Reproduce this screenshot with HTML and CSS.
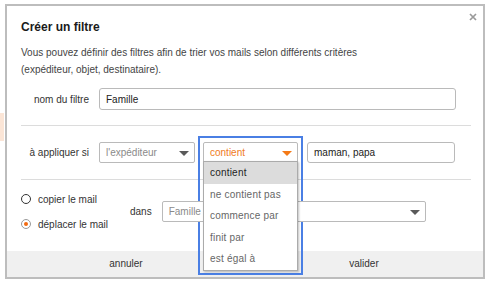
FILE: index.html
```html
<!DOCTYPE html>
<html>
<head>
  <meta charset="utf-8">
  <title>Créer un filtre</title>
  <link rel="stylesheet" href="styles.css">
</head>
<body>
  <div class="dialog">
    <a class="close" href="#">
      <svg width="8" height="8" viewBox="0 0 8 8"><path d="M1 1L7 7M7 1L1 7" stroke="#9a9a9a" stroke-width="1.7"/></svg>
    </a>

    <h1 class="title">Créer un filtre</h1>
    <p class="intro">Vous pouvez définir des filtres afin de trier vos mails selon différents critères<br>(expéditeur, objet, destinataire).</p>

    <div class="row row-name">
      <label class="label">nom du filtre</label>
      <div class="field text name">Famille</div>
    </div>

    <hr class="sep">

    <div class="row row-rule">
      <label class="label">à appliquer si</label>
      <div class="field select sender">l'expéditeur<span class="arrow"></span></div>
      <div class="focus">
        <div class="field select active">contient<span class="arrow"></span></div>
        <ul class="menu">
          <li class="current">contient</li>
          <li>ne contient pas</li>
          <li>commence par</li>
          <li>finit par</li>
          <li>est égal à</li>
        </ul>
      </div>
      <div class="field text value">maman, papa</div>
    </div>

    <hr class="sep sep-low">

    <div class="row row-action">
      <div class="radios">
        <div class="radio"><span class="dot"></span>copier le mail</div>
        <div class="radio checked"><span class="dot"></span>déplacer le mail</div>
      </div>
      <span class="dans">dans</span>
      <div class="field select folder">Famille<span class="arrow"></span></div>
    </div>

    <div class="footer">
      <a class="btn" href="#">annuler</a>
      <a class="btn" href="#">valider</a>
    </div>
  </div>
</body>
</html>
```

FILE: styles.css
```css
html {
  font-family: "Liberation Sans", Arial, sans-serif;
}
body {
  margin: 0;
  font-size: 10px;
  color: #333;
  background: linear-gradient(#fbe5d6, #fbe5d6) 0 113px / 4px 28px no-repeat, #fff;
}

a {
  text-decoration: none;
  color: inherit;
}

.dialog {
  position: relative;
  box-sizing: border-box;
  width: 480px;
  height: 275px;
  margin: 4px 0 0 5px;
  border: 2px solid #bdbdbd;
  background: #fff;
  display: flex;
  flex-direction: column;
}

.close {
  position: absolute;
  top: 7px;
  right: 6px;
  width: 8px;
  height: 8px;
  display: flex;
}

.title {
  margin: 13px 0 0 14px;
  font-size: 12px;
  line-height: 16px;
  color: #1a1a1a;
}
.intro {
  margin: 9px 0 0 14px;
  line-height: 17px;
  color: #444;
}

.row {
  display: flex;
  align-items: center;
  margin-left: 14px;
}
.row-name {
  margin-top: 10px;
}
.row-rule {
  margin-top: 16px;
}
.row-action {
  margin-top: 11px;
}

.label {
  width: 68px;
  margin-right: 10px;
  text-align: right;
  color: #333;
}

.sep {
  margin: 15px 12px 0 14px;
  border: 0;
  border-top: 1px solid #dcdcdc;
}
.sep-low {
  margin-top: 16px;
}

.field {
  position: relative;
  box-sizing: border-box;
  height: 21px;
  padding-left: 6px;
  border: 1px solid #bababa;
  border-radius: 3px;
  background: #fff;
  display: flex;
  align-items: center;
  color: #222;
}
.field.select {
  color: #8a8a8a;
  border-radius: 2px;
}
.name {
  width: 357px;
  height: 22px;
}
.sender {
  width: 96px;
}
.value {
  width: 148px;
  margin-left: 9px;
}
.folder {
  width: 264px;
}

.arrow {
  position: absolute;
  right: 5px;
  top: 8px;
  width: 0;
  height: 0;
  border-left: 5px solid transparent;
  border-right: 5px solid transparent;
  border-top: 5px solid #5a5a5a;
}

.focus {
  position: relative;
  margin-left: 8px;
}
.focus::before {
  content: "";
  position: absolute;
  left: -5px;
  top: -6px;
  right: -5px;
  height: 139px;
  border: 2px solid #4a7fe4;
  box-sizing: border-box;
}
.field.active {
  width: 95px;
  color: #f07b1d;
}
.active .arrow {
  border-top-color: #f47a17;
}

.menu {
  position: absolute;
  left: 0;
  right: 0;
  top: 19px;
  margin: 0;
  padding: 0;
  list-style: none;
  background: #fff;
  border: 1px solid #ababab;
  box-shadow: 1px 1px 2px rgba(0, 0, 0, 0.25);
  z-index: 2;
}
.menu li {
  height: 21.5px;
  line-height: 22px;
  padding-left: 6px;
  color: #666;
  letter-spacing: 0.2px;
}
.menu li.current {
  background: #dcdcdc;
  color: #1e1e1e;
}

.radios {
  width: 109px;
  display: flex;
  flex-direction: column;
  gap: 9px;
}
.radio {
  display: flex;
  align-items: center;
  height: 16px;
  color: #333;
}
.dot {
  box-sizing: border-box;
  width: 10px;
  height: 10px;
  margin-right: 7px;
  border: 1.3px solid #333;
  border-radius: 50%;
  display: flex;
  align-items: center;
  justify-content: center;
}
.checked .dot {
  border-color: #9a9a9a;
}
.checked .dot::after {
  content: "";
  width: 4px;
  height: 4px;
  border-radius: 50%;
  background: #f26a10;
}

.dans {
  margin-right: 10px;
  color: #333;
}

.footer {
  margin-top: auto;
  height: 26px;
  background: #f0f0f0;
  display: flex;
}
.btn {
  flex: 1;
  text-align: center;
  line-height: 26px;
  color: #333;
}
```
